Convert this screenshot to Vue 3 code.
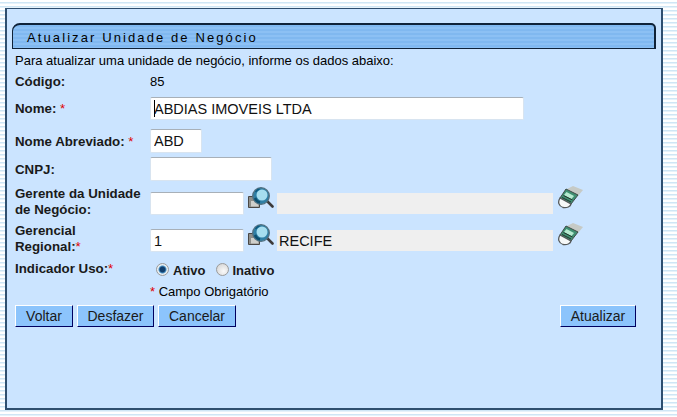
<template>
  <div class="page">
    <div class="panel">
      <div class="title-bar">
        <span class="title-text">Atualizar Unidade de Negócio</span>
      </div>
      <p class="intro">Para atualizar uma unidade de negócio, informe os dados abaixo:</p>

      <div class="row row-code">
        <label class="lbl">Código:</label>
        <span class="value">85</span>
      </div>

      <div class="row row-name">
        <label class="lbl">Nome: <em>*</em></label>
        <div class="name-wrap">
          <input class="field big name" value="ABDIAS IMOVEIS LTDA" />
        </div>
      </div>

      <div class="row row-short">
        <label class="lbl">Nome Abreviado: <em>*</em></label>
        <input class="field big short" value="ABD" />
      </div>

      <div class="row row-cnpj">
        <label class="lbl">CNPJ:</label>
        <input class="field cnpj" />
      </div>

      <div v-for="item in lookups" :key="item.id" class="row row-lookup">
        <label class="lbl two-lines">{{ item.line1 }}<br />{{ item.line2 }}<em v-if="item.required">*</em></label>
        <input class="field big code" :value="item.code" />
        <svg class="icon-search" width="27" height="22" viewBox="0 0 27 22">
          <path d="M1.500 10.500h9l2 2v9h-11z" fill="#8e8e8a" stroke="#4a4744" />
          <path d="M4 15h7.500v5.500H4z" fill="#cfcfcb" />
          <path d="M20 15l5.500 5.500" stroke="#3d3a3a" stroke-width="2.600" stroke-linecap="round" />
          <circle cx="14" cy="10" r="8.300" fill="#2f7fa5" stroke="#52707f" stroke-width="1.300" />
          <circle cx="15" cy="9" r="5.500" fill="#a6deef" />
          <path d="M8 12a7 7 0 0 0 5 4.500" stroke="#0c4f70" stroke-width="2.400" fill="none" />
          <path d="M8.500 6a7 7 0 0 1 4-3" stroke="#0c5a80" stroke-width="1.500" fill="none" />
        </svg>
        <input class="field readonly big" :value="item.desc" readonly />
        <svg class="icon-eraser" width="27" height="24" viewBox="0 0 27 24">
          <path d="M9 4l6-3 10 4-5 6z" fill="#c6cac6" />
          <path d="M8 4l12 6-7 9-11-6z" fill="#3f8f72" stroke="#3f4a45" />
          <path d="M8.500 7l7.500 4-2.500 3-7.500-4z" fill="#b6ead0" />
          <path d="M4 12.500l9 4.500M5.500 10.500l9 4.500" stroke="#26352e" />
          <path d="M2 13c-2.500 4-1.500 8 3 9.500 4 .8 7.500-1 8-3.500z" fill="#f6f8f8" stroke="#55595a" stroke-width="1.300" />
        </svg>
      </div>

      <div class="row row-use">
        <label class="lbl">Indicador Uso:<em>*</em></label>
        <div class="radios">
          <label class="radio"><input type="radio" name="uso" checked /> Ativo</label>
          <label class="radio"><input type="radio" name="uso" /> Inativo</label>
        </div>
      </div>

      <div class="required-note"><em>*</em> Campo Obrigatório</div>

      <div class="actions">
        <div class="actions-left">
          <button class="btn voltar">Voltar</button>
          <button class="btn desfazer">Desfazer</button>
          <button class="btn cancelar">Cancelar</button>
        </div>
        <button class="btn atualizar">Atualizar</button>
      </div>
    </div>
  </div>
</template>

<script setup>
const lookups = [
  { id: 'gerente', line1: 'Gerente da Unidade', line2: 'de Negócio:', required: false, code: '', desc: '' },
  { id: 'regional', line1: 'Gerencial', line2: 'Regional:', required: true, code: '1', desc: 'RECIFE' }
]
</script>

<style>
html,
body {
  margin: 0;
  overflow: hidden;
}
</style>

<style scoped>
.page {
  width: 677px;
  height: 417px;
  box-sizing: border-box;
  padding: 8px 14px 7px 5px;
  background: repeating-linear-gradient(#ffffff 0 2px, #cfe6f5 2px 3px, #e6f2fa 3px 4px);
  font-family: "Liberation Sans", Arial, sans-serif;
  font-size: 13px;
  color: #000;
}
.panel {
  height: 100%;
  box-sizing: border-box;
  padding: 14px 5px 0 5px;
  background: #cbe4ff;
  border: 1px solid #2f4f6f;
  border-width: 1px 2px 2px 2px;
}
.title-bar {
  height: 26px;
  box-sizing: border-box;
  padding-left: 14px;
  line-height: 25px;
  border: 1px solid #0f2238;
  border-width: 2px 2px 1px 1px;
  border-radius: 8px 5px 0 0;
  background: repeating-linear-gradient(#80b8f0 0 2px, #8cc0f4 2px 4px);
}
.title-text {
  font-size: 13px;
  letter-spacing: 2.1px;
}
.intro {
  margin: 5px 0 0 3px;
  line-height: 14px;
}
.row {
  display: flex;
  align-items: center;
  padding-left: 3px;
}
.row-code {
  margin-top: 4px;
  height: 18px;
}
.row-name {
  margin-top: 7px;
}
.row-short {
  margin-top: 9px;
}
.row-cnpj {
  margin-top: 4px;
  margin-bottom: 7px;
}
.row-lookup {
  margin-top: 6px;
  height: 31px;
}
.row-use {
  margin-top: 5px;
  height: 18px;
  align-items: flex-start;
}
.lbl {
  width: 135px;
  flex: none;
  font-size: 13.3px;
  font-weight: bold;
  line-height: 15px;
  color: #1a1a1a;
}
.two-lines {
  line-height: 16px;
  margin-top: -4px;
}
em {
  font-style: normal;
  font-weight: normal;
  color: #e00000;
}
.field {
  box-sizing: border-box;
  height: 24px;
  padding: 1px 3px;
  background: #fff;
  border: 1px solid #d8e4f0;
  border-top-color: #a8b0b8;
  border-radius: 2px;
  font-family: inherit;
  font-size: 13px;
  color: #111;
  outline: none;
}
.big {
  font-size: 14.5px;
}
.name-wrap {
  position: relative;
  display: flex;
}
.name-wrap::after {
  content: "";
  position: absolute;
  left: 4px;
  top: 3px;
  width: 1px;
  height: 17px;
  background: #000;
}
.name {
  width: 374px;
  height: 23px;
}
.short {
  width: 52px;
}
.cnpj {
  width: 122px;
}
.code {
  width: 94px;
  height: 23px;
}
.readonly {
  width: 276px;
  height: 21px;
  padding: 0 2px;
  background: #efefef;
  border: none;
  border-radius: 0;
}
.icon-search {
  flex: none;
  margin: -13px 3px 0 3px;
}
.icon-eraser {
  flex: none;
  margin: -13px 0 0 5px;
}
.radios {
  display: flex;
  gap: 10px;
  margin-left: 6px;
  margin-top: 2px;
}
.radio {
  display: flex;
  align-items: center;
  gap: 4px;
  font-size: 13px;
  line-height: 15px;
  font-weight: bold;
  color: #1a1a1a;
}
.radio input {
  appearance: none;
  margin: -2px 0 0;
  width: 13px;
  height: 13px;
  border-radius: 50%;
  border: 1px solid #9a9a9a;
  background: radial-gradient(circle at 60% 65%, #fafafa, #cfcfcf);
}
.radio input:checked {
  background: radial-gradient(circle, #123f6e 0 2.500px, #4b94c8 3.500px, #e8eef2 4.500px);
}
.required-note {
  margin: 5px 0 0 138px;
  line-height: 15px;
}
.actions {
  display: flex;
  justify-content: space-between;
  margin: 6px 20px 0 3px;
}
.actions-left {
  display: flex;
  gap: 4px;
}
.btn {
  height: 22px;
  padding: 0;
  background: #8cc4fc;
  border: 1px solid #000060;
  border-color: #fff #000060 #000060 #fff;
  font-family: inherit;
  font-size: 14px;
  color: #1a1a1a;
}
.voltar {
  width: 58px;
}
.desfazer {
  width: 77px;
}
.cancelar {
  width: 78px;
}
.atualizar {
  width: 76px;
}
</style>
